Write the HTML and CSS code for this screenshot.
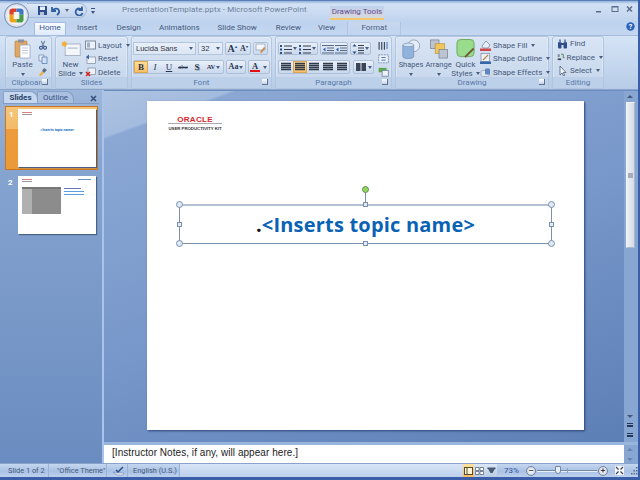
FILE: index.html
```html
<!DOCTYPE html>
<html>
<head>
<meta charset="utf-8">
<title>PresentationTemplate.pptx - Microsoft PowerPoint</title>
<link rel="stylesheet" href="styles.css">
</head>
<body>
<div class="window">
  <header class="titlebar">
    <div class="orb"><svg width="17" height="17" viewBox="0 0 24 24"><rect x="1" y="1" width="22" height="22" rx="5" fill="#fff"/><path d="M2 6q0-4 4-4h6v9H2z" fill="#d8402a"/><path d="M12 2h6q4 0 4 4v5H12z" fill="#3c78c8"/><path d="M2 11h10v11H6q-4 0-4-4z" fill="#eca420"/><path d="M12 11h10v7q0 4-4 4h-6z" fill="#4a9a48"/><rect x="8" y="7" width="8" height="10" fill="#fff" opacity=".9"/></svg></div>
    <div class="qat">
      <svg width="11" height="11" viewBox="0 0 11 11"><rect x="1" y="1" width="9" height="9" fill="#2d4f8f"/><rect x="3" y="1.500" width="5" height="3.500" fill="#e8eef8"/><rect x="3" y="7" width="4" height="3" fill="#b4c4dc"/></svg>
      <svg width="12" height="11" viewBox="0 0 12 11"><path d="M2 2v4h4M2.500 6C4 3 8 3 9 5.500S8 9 7 10" fill="none" stroke="#2f5f9f" stroke-width="1.800"/></svg>
      <span class="qat-arrow"></span>
      <svg class="redo" width="11" height="11" viewBox="0 0 11 11"><path d="M8 1.500v3.500H4.500M8 5A3.500 3.500 0 1 0 8.500 8" fill="none" stroke="#2f5f9f" stroke-width="1.800"/></svg>
    </div>
    <span class="qat-more"></span>
    <div class="doc-title">PresentationTemplate.pptx - Microsoft PowerPoint</div>
    <div class="context-title">Drawing Tools</div>
    <div class="winbtns">
      <svg width="50" height="12" viewBox="0 0 50 12"><rect x="10" y="8" width="5" height="1.500" fill="#5a6d8c"/><rect x="26" y="3.500" width="6" height="5" fill="none" stroke="#5a6d8c"/><rect x="26" y="3" width="6" height="1.500" fill="#5a6d8c"/><path d="M41 3.500l5 5M46 3.500l-5 5" stroke="#5a6d8c" stroke-width="1.500"/></svg>
    </div>
  </header>

  <nav class="tabs">
    <span class="tab active">Home</span>
    <span class="tab t-insert">Insert</span>
    <span class="tab t-design">Design</span>
    <span class="tab t-anim">Animations</span>
    <span class="tab t-show">Slide Show</span>
    <span class="tab t-review">Review</span>
    <span class="tab t-view">View</span>
    <span class="tab t-format">Format</span>
    <svg class="help" width="9" height="9" viewBox="0 0 9 9"><circle cx="4.500" cy="4.500" r="4.200" fill="#2c62b8"/><text x="4.500" y="7" text-anchor="middle" class="help-q">?</text></svg>
  </nav>

  <section class="ribbon">
    <div class="group g-clip">
      <div class="gbody clip-body">
        <div class="big paste">
          <svg width="17" height="20" viewBox="0 0 17 20"><rect x="1" y="2" width="12" height="16" rx="1" fill="#e0a860" stroke="#b07a38" stroke-width=".6"/><rect x="4" y="0.500" width="6" height="3" fill="#8a90a0"/><path d="M6 6h10v13H6z" fill="#fff" stroke="#8b9cb8" stroke-width=".7"/><path d="M8 9h6M8 11.500h6M8 14h6" stroke="#a9b7cd" stroke-width=".8"/></svg>
          <span>Paste</span><i class="drop"></i>
        </div>
        <div class="clip-icons">
          <svg width="10" height="10" viewBox="0 0 10 11"><path d="M3 1l3 6M7 1L4 7" stroke="#6e7f9a" stroke-width="1.200"/><circle cx="2.800" cy="8.500" r="1.600" fill="none" stroke="#2c4f88" stroke-width="1.200"/><circle cx="7.200" cy="8.500" r="1.600" fill="none" stroke="#2c4f88" stroke-width="1.200"/></svg>
          <svg width="10" height="10" viewBox="0 0 10 10"><path d="M1 1h5v6H1z" fill="#e8eef8" stroke="#6f86ad" stroke-width=".7"/><path d="M4 3h5v6.500H4z" fill="#cfe0f4" stroke="#4f73ad" stroke-width=".7"/></svg>
          <svg width="10" height="10" viewBox="0 0 10 10"><path d="M6 1l3 2-3 3-2-2z" fill="#5c6b85"/><path d="M4 4L1 8l1 1.500 4-3z" fill="#e8b64a"/></svg>
        </div>
      </div>
      <div class="glabel">Clipboard<i class="launch"></i></div>
    </div>

    <div class="group g-slides">
      <div class="gbody slides-body">
        <div class="big newslide">
          <svg width="20" height="20" viewBox="0 0 24 20"><rect x="5" y="4" width="18" height="14" fill="#f4f6fa" stroke="#8e9bb0" stroke-width=".8"/><rect x="8" y="8" width="12" height="2" fill="#c3cede"/><path d="M4 0l1 2 2-1-1 2 2 1-2 1 1 2-2-1-1 2-1-2-2 1 1-2-2-1 2-1-1-2 2 1z" fill="#f0b030"/></svg>
          <span>New</span><span>Slide <i class="drop inline"></i></span>
        </div>
        <div class="rows">
          <div class="row"><svg width="11" height="10" viewBox="0 0 11 10"><rect x=".5" y="1" width="10" height="8" fill="#eef2f8" stroke="#7c8aa2"/><rect x="2" y="2.500" width="3" height="5" fill="#9fb0c8"/></svg><span>Layout</span><i class="drop inline"></i></div>
          <div class="row"><svg width="11" height="10" viewBox="0 0 11 10"><rect x="2" y="3" width="8.500" height="6.500" fill="#eef2f8" stroke="#7c8aa2" stroke-width=".7"/><path d="M1 3l3-2.500v5z" fill="#3566a8"/></svg><span>Reset</span></div>
          <div class="row"><svg width="11" height="10" viewBox="0 0 11 10"><rect x="3" y="1" width="7.500" height="6.500" fill="#eef2f8" stroke="#7c8aa2" stroke-width=".7"/><path d="M1 5l4 4M5 5L1 9" stroke="#d42020" stroke-width="1.500"/></svg><span>Delete</span></div>
        </div>
      </div>
      <div class="glabel">Slides</div>
    </div>

    <div class="group g-font">
      <div class="gbody font-body">
        <div class="fline">
          <div class="combo c-name"><span>Lucida Sans</span><i class="drop"></i></div>
          <div class="combo c-size"><span>32</span><i class="drop"></i></div>
          <div class="btnset"><b class="fb grow">A<sup>▴</sup></b><b class="fb shrink">A<sup>▾</sup></b></div>
          <div class="btnset"><span class="fb clear"><svg width="11" height="11" viewBox="0 0 11 11"><rect x="1" y="1" width="9" height="6" fill="#f4f6fa" stroke="#7c8aa2" stroke-width=".6"/><path d="M5 9l4-5 1.500 1-4 5z" fill="#c88a48"/></svg></span></div>
        </div>
        <div class="fline l2">
          <div class="btnset fmt">
            <b class="fb on">B</b><i class="fb it">I</i><u class="fb">U</u><s class="fb sm">abc</s><b class="fb shadowed">S</b><span class="fb av">AV<i class="drop"></i></span>
          </div>
          <div class="btnset"><span class="fb aa">Aa<i class="drop"></i></span></div>
          <div class="btnset"><span class="fb color">A<em></em></span><span class="fb caret"><i class="drop"></i></span></div>
        </div>
      </div>
      <div class="glabel">Font<i class="launch"></i></div>
    </div>

    <div class="group g-para">
      <div class="gbody para-body">
        <div class="para-main">
          <div class="fline">
            <div class="btnset">
              <span class="pb wide"><svg width="12" height="10" viewBox="0 0 12 10"><use href="#bul"/></svg><i class="drop"></i></span>
              <span class="pb wide"><svg width="12" height="10" viewBox="0 0 12 10"><use href="#bul"/></svg><i class="drop"></i></span>
            </div>
            <div class="btnset">
              <span class="pb"><svg width="12" height="10" viewBox="0 0 12 10"><use href="#ind"/></svg></span>
              <span class="pb"><svg width="12" height="10" viewBox="0 0 12 10"><use href="#ind"/></svg></span>
            </div>
            <div class="btnset"><span class="pb wide"><svg width="12" height="10" viewBox="0 0 12 10"><path d="M2.500 0l2 2.500h-4zM2.500 10l2-2.500h-4z" fill="#2c4f88"/><path d="M6 1.500h6M6 4h6M6 6.500h6M6 9h6" stroke="#333d4d"/></svg><i class="drop"></i></span></div>
          </div>
          <div class="fline l2">
            <div class="btnset">
              <span class="pb al"><svg width="12" height="10" viewBox="0 0 12 10"><use href="#aln"/></svg></span>
              <span class="pb al on"><svg width="12" height="10" viewBox="0 0 12 10"><use href="#aln"/></svg></span>
              <span class="pb al"><svg width="12" height="10" viewBox="0 0 12 10"><use href="#aln"/></svg></span>
              <span class="pb al"><svg width="12" height="10" viewBox="0 0 12 10"><use href="#aln"/></svg></span>
              <span class="pb al"><svg width="12" height="10" viewBox="0 0 12 10"><use href="#aln"/></svg></span>
            </div>
            <div class="btnset"><span class="pb wide"><svg width="12" height="10" viewBox="0 0 12 10"><path d="M1 1h4.500v8H1zM6.500 1H11v8H6.500z" fill="#3a4556"/></svg><i class="drop"></i></span></div>
          </div>
        </div>
        <div class="para-side">
          <svg width="13" height="11" viewBox="0 0 13 11"><path d="M1.500 1v9M4.500 1v9M7.500 1v9" stroke="#2f3a4c" stroke-width="1.200"/><path d="M10.500 1v8" stroke="#2c62b8"/></svg>
          <svg width="13" height="11" viewBox="0 0 13 11"><rect x="1" y="1" width="11" height="9" fill="#eef2f8" stroke="#6f86ad" stroke-dasharray="2 1"/><path d="M4 4h5M4 7h5" stroke="#3566a8"/></svg>
          <svg width="13" height="11" viewBox="0 0 13 11"><rect x="1" y="1" width="9" height="5" fill="#5aa84a"/><rect x="5" y="4" width="7" height="6.500" fill="#eef2f8" stroke="#7c8aa2"/></svg>
        </div>
      </div>
      <div class="glabel">Paragraph<i class="launch"></i></div>
    </div>

    <div class="group g-draw">
      <div class="gbody draw-body">
        <div class="big shapes">
          <svg width="20" height="20" viewBox="0 0 22 21"><circle cx="14" cy="7" r="6.500" fill="#e6edf6" stroke="#8fa0b8"/><path d="M2 6h12v13a6 2 0 0 1-12 0z" fill="#8fb3dc" stroke="#6f86ad" stroke-width=".7"/><ellipse cx="8" cy="6" rx="6" ry="2" fill="#d5e4f5" stroke="#6f86ad" stroke-width=".7"/></svg>
          <span>Shapes</span><i class="drop"></i>
        </div>
        <div class="big arrange">
          <svg width="20" height="20" viewBox="0 0 20 21"><rect x="1" y="1" width="9" height="9" fill="#bcc4d0" stroke="#6f7b8e" stroke-width=".7"/><rect x="6" y="5" width="10" height="10" fill="#f2c65a" stroke="#b8903a" stroke-width=".7"/><rect x="10" y="11" width="9" height="9" fill="#bcc4d0" stroke="#6f7b8e" stroke-width=".7"/></svg>
          <span>Arrange</span><i class="drop"></i>
        </div>
        <div class="big qstyles">
          <svg width="20" height="20" viewBox="0 0 20 21"><rect x=".5" y=".5" width="18" height="18" rx="4" fill="#98dc8c" stroke="#6aa860"/><path d="M18 10l-9 9" stroke="#6d5a3a" stroke-width="2"/></svg>
          <span>Quick</span><span>Styles <i class="drop inline"></i></span>
        </div>
        <div class="rows shape-rows">
          <div class="row"><svg width="11" height="11" viewBox="0 0 11 11"><path d="M2 6l4-5 4 4-2 3H3z" fill="#e8eef8" stroke="#6f7b8e" stroke-width=".7"/><rect y="8.500" width="11" height="2.500" fill="#d04848"/></svg><span>Shape Fill</span><i class="drop inline"></i></div>
          <div class="row"><svg width="11" height="11" viewBox="0 0 11 11"><rect x="1" y="0.500" width="8.500" height="8" fill="#eef2f8" stroke="#7c8aa2" stroke-width=".7"/><path d="M3 7l5-5" stroke="#b88a48" stroke-width="1.300"/><rect y="8.500" width="11" height="2.500" fill="#3566a8"/></svg><span>Shape Outline</span><i class="drop inline"></i></div>
          <div class="row"><svg width="11" height="11" viewBox="0 0 11 11"><rect x="1" y="3.500" width="8" height="6" rx="1.500" fill="#dfe7f2" stroke="#8b9cb8" stroke-width=".7"/><rect x="5" y="1.500" width="5" height="6" rx="1" fill="#5e86bc"/></svg><span>Shape Effects</span><i class="drop inline"></i></div>
        </div>
      </div>
      <div class="glabel">Drawing<i class="launch"></i></div>
    </div>

    <div class="group g-edit">
      <div class="gbody edit-body">
        <div class="row"><svg width="11" height="10" viewBox="0 0 11 10"><rect x="1" y="3" width="3.500" height="6.500" rx="1" fill="#2c4f88"/><rect x="6.500" y="3" width="3.500" height="6.500" rx="1" fill="#2c4f88"/><rect x="2" y="0.500" width="2" height="3" fill="#6f86ad"/><rect x="7" y="0.500" width="2" height="3" fill="#6f86ad"/><rect x="4" y="4" width="3" height="2" fill="#2c4f88"/></svg><span>Find</span></div>
        <div class="row"><svg width="11" height="10" viewBox="0 0 11 10"><path d="M1 1h3v4H1z" fill="#7c8aa2"/><path d="M1 7h5v2.500H1z" fill="#3a4556"/><path d="M6 1h3v5h2" fill="none" stroke="#3a7a3a" stroke-width="1.200"/></svg><span>Replace</span><i class="drop inline"></i></div>
        <div class="row"><svg width="11" height="10" viewBox="0 0 11 10"><path d="M3 0v9l2-2 1.500 3 1.200-.6L6.300 6.500H9z" fill="#f4f6fa" stroke="#4a5a74" stroke-width=".8"/></svg><span>Select</span><i class="drop inline"></i></div>
      </div>
      <div class="glabel">Editing</div>
    </div>
  </section>

  <main class="workspace">
    <aside class="pane">
      <div class="pane-tabs">
        <span class="ptab on">Slides</span>
        <span class="ptab out">Outline</span>
        <svg class="pane-x" width="7" height="7" viewBox="0 0 7 7"><path d="M1 1l5 5M6 1L1 6" stroke="#33507e" stroke-width="1.500"/></svg>
      </div>
      <div class="thumb-wrap selected">
        <span class="num">1</span>
        <div class="thumb">
          <div class="mini-logo"><i></i><i></i></div>
          <div class="mini-title">.&lt;Inserts topic name&gt;</div>
        </div>
      </div>
      <div class="thumb-wrap">
        <span class="num">2</span>
        <div class="thumb t2">
          <div class="mini-logo"><i></i><i></i></div>
          <div class="mini-top"></div>
          <div class="mini-shot"><i></i></div>
          <div class="mini-lines"><i></i><i></i><i></i></div>
        </div>
      </div>
    </aside>

    <div class="center">
      <div class="edit-row">
        <div class="stage">
          <article class="slide">
            <div class="logo">
              <span class="oracle">ORACLE</span>
              <span class="upk">USER PRODUCTIVITY KIT</span>
            </div>
            <div class="selbox">
              <div class="title-text"><span class="dot">.</span>&lt;Inserts topic name&gt;</div>
              <i class="stem"></i><i class="rot"></i>
              <i class="h c tl"></i><i class="h c tr"></i><i class="h c bl"></i><i class="h c br"></i>
              <i class="h s tm"></i><i class="h s bm"></i><i class="h s ml"></i><i class="h s mr"></i>
            </div>
          </article>
        </div>
        <div class="vscroll">
          <span class="sb-btn up"></span>
          <span class="sb-thumb"><i></i></span>
          <span class="sb-space"></span>
          <span class="sb-btn down"></span>
          <span class="sb-nav prev"></span>
          <span class="sb-nav next"></span>
        </div>
      </div>
      <div class="notes-row">
        <div class="notes">[Instructor Notes, if any, will appear here.]</div>
        <div class="notes-sb"><span class="sb-btn up dim"></span><span class="sb-btn down dim"></span></div>
      </div>
    </div>
  </main>

  <footer class="status">
    <span class="st s1">Slide 1 of 2</span>
    <span class="st s2">"Office Theme"</span>
    <span class="st s3"><svg width="13" height="10" viewBox="0 0 13 10"><path d="M1 6l4 3h6l1-2H5z" fill="#f4f6fa" stroke="#6f86ad" stroke-width=".6"/><path d="M4 4l2 2 5-5" fill="none" stroke="#2c4f88" stroke-width="1.500"/></svg></span>
    <span class="st s4">English (U.S.)</span>
    <span class="st-fill"></span>
    <div class="views">
      <span class="vb on"><svg width="9" height="8" viewBox="0 0 9 8"><rect x=".5" y=".5" width="8" height="7" fill="#fff5d8" stroke="#5a4a2a"/><path d="M3 1v6" stroke="#5a4a2a"/></svg></span>
      <span class="vb"><svg width="9" height="8" viewBox="0 0 9 8"><path d="M.5.500h3.500v3H.5zM5 .5h3.500v3H5zM.5 4.500h3.500v3H.5zM5 4.500h3.500v3H5z" fill="#fff" stroke="#4a5a74" stroke-width=".7"/></svg></span>
      <span class="vb"><svg width="9" height="8" viewBox="0 0 9 8"><path d="M.5 1h8L5.500 6h-2z" fill="#4a5a74"/><rect x=".5" y=".5" width="8" height="1.500" fill="#4a5a74"/></svg></span>
    </div>
    <span class="pct">73%</span>
    <div class="zoomer">
      <span class="zbtn">–</span>
      <div class="ztrack"><i class="ztick"></i><i class="zthumb"></i></div>
      <span class="zbtn">+</span>
    </div>
    <span class="fit"><svg width="9" height="9" viewBox="0 0 9 9"><rect width="9" height="9" fill="#f4f6fa"/><path d="M1 1l2.500 2.500M8 1L5.500 3.500M1 8l2.500-2.500M8 8L5.500 5.500" stroke="#3a4556" stroke-width="1.200"/></svg></span>
    <span class="grip"><svg width="8" height="8" viewBox="0 0 8 8"><path d="M6 0h1.500v1.500H6zM3.500 3H5v1.500H3.500zM6 3h1.500v1.500H6zM1 6h1.500v1.500H1zM3.500 6H5v1.500H3.500zM6 6h1.500v1.500H6z" fill="#5c7092"/></svg></span>
  </footer>
</div>

<svg class="defs" width="0" height="0">
  <defs>
    <g id="bul"><path d="M0 1h2v2H0zM0 4.500h2v2H0zM0 8h2v2H0z" fill="#2c4f88"/><path d="M4 2h8M4 5.500h8M4 9h8" stroke="#333d4d"/></g>
    <g id="ind"><path d="M0 1.500h12M5 4h7M5 6.500h7M0 9h12" stroke="#5a6a84"/><path d="M3.500 3.500v4L1 5.500z" fill="#2c62b8"/></g>
    <g id="aln"><path d="M1 1.500h10M1 3.500h10M1 5.500h10M1 7.500h10" stroke="#2f3a4c" stroke-width="1.300"/></g>
  </defs>
</svg>
</body>
</html>
```

FILE: styles.css
```css
* { box-sizing: border-box; }
html, body { margin: 0; padding: 0; }
body { width: 640px; height: 480px; overflow: hidden; font-family: Roboto, "Noto Sans", sans-serif; font-size: 8px; color: #46597b; }
i, em { font-style: normal; }
.defs { position: absolute; }

.window { width: 640px; height: 480px; display: flex; flex-direction: column; background: #6c8dbf; border-bottom: 3px solid #3a5fa8; border-right: 2px solid #3a5fa8; }

/* Title bar */
.titlebar { height: 22px; flex: none; display: flex; align-items: flex-start; position: relative; padding-top: 2px; background: linear-gradient(#8fb0dc 0, #d3e1f4 3px, #c9daf1 12px, #bdd2ee 22px); border-top: 1px solid #5c7fb8; }
.orb { position: absolute; left: 4px; top: 2px; width: 25px; height: 25px; border-radius: 50%; background: radial-gradient(#ffffff, #e6eaf2 60%, #8ea5c8); border: 1px solid #7a8fb0; display: flex; align-items: center; justify-content: center; z-index: 2; }
.qat { margin-left: 27px; height: 15px; width: 60px; padding: 0 0 0 10px; display: flex; align-items: center; gap: 2px; background: linear-gradient(#dfe9f7, #bfd2ec); border-radius: 0 8px 8px 0; border: 1px solid #a4bbdb; border-left: 0; flex: none; }
.qat-arrow { width: 0; height: 0; border: 2px solid transparent; border-top: 3px solid #5a6a84; border-bottom: 0; margin: 0 2px 0 1px; }
.qat .redo { margin-left: 1px; }
.qat-more { width: 4px; height: 6px; margin: 5px 0 0 4px; border-top: 1px solid #3f5377; position: relative; flex: none; }
.qat-more::after { content: ""; position: absolute; top: 2px; left: 0; border: 2px solid transparent; border-top: 3px solid #3f5377; border-bottom: 0; }
.doc-title { margin-left: 27px; font-size: 8px; letter-spacing: .1px; line-height: 13px; color: #6d7f9b; white-space: nowrap; width: 208px; flex: none; }
.context-title { width: 54px; height: 14px; flex: none; margin-top: 3px; background: linear-gradient(#bed1ec, #d8d8dc); border-bottom: 2px solid #f0c76a; color: #6a4a8c; text-align: center; line-height: 11px; font-size: 8px; }
.winbtns { margin-left: auto; margin-right: 2px; height: 12px; }

/* Tabs */
.tabs { height: 13px; flex: none; display: flex; align-items: flex-end; position: relative; background: linear-gradient(#bdd2ee, #c4d7f1); font-size: 8px; line-height: 11px; color: #46597b; }
.tab { display: block; white-space: nowrap; height: 13px; }
.tab.active { margin-left: 34px; width: 32px; text-align: center; color: #3a5a96; background: linear-gradient(#f8fbff, #dfeafa); border: 1px solid #a3bbdc; border-bottom: 0; border-radius: 2px 2px 0 0; line-height: 10px; }
.t-insert { margin-left: 11px; }
.t-design { margin-left: 19px; }
.t-anim { margin-left: 18px; }
.t-show { margin-left: 18px; }
.t-review { margin-left: 19px; }
.t-view { margin-left: 17px; }
.t-format { margin-left: 12px; width: 54px; text-align: center; color: #4c5d82; background: linear-gradient(#c6d7ee, #c2d5f0); border-left: 1px solid #aec4e0; border-right: 1px solid #aec4e0; }
.help { position: absolute; right: 3px; top: 0; }
.help-q { font: 700 7px Roboto, sans-serif; fill: #fff; }

/* Ribbon */
.ribbon { height: 55px; flex: none; display: flex; padding: 0 0 0 5px; background: linear-gradient(#d5e3f5, #c3d6ee 60%, #b6cbe7); border-top: 1px solid #a5bddd; border-bottom: 1px solid #8aa5cb; gap: 3px; }
.group { display: flex; flex-direction: column; background: linear-gradient(#d9e5f5, #c5d5ea); border: 1px solid #b2c5df; border-radius: 3px; box-shadow: inset 0 0 0 1px rgba(255,255,255,.25); }
.gbody { flex: 1; display: flex; min-height: 0; }
.glabel { height: 11px; flex: none; position: relative; text-align: center; line-height: 11px; font-size: 8px; color: #5a7aa8; background: #bcd0e9; border-radius: 0 0 2px 2px; }
.launch { position: absolute; right: 3px; top: 2px; width: 6px; height: 6px; border-right: 1px solid #5e7392; border-bottom: 1px solid #5e7392; background: linear-gradient(#fff, #c4d2e6); }
.g-clip { width: 47px; }
.g-slides { width: 73px; }
.g-font { width: 141px; }
.g-para { width: 117px; }
.g-draw { width: 154px; }
.g-edit { width: 52px; }

.big { display: flex; flex-direction: column; align-items: center; text-align: center; line-height: 8.500px; flex: none; white-space: nowrap; }
.big svg { margin-bottom: 2px; flex: none; }
.drop { display: block; width: 0; height: 0; border: 2px solid transparent; border-top: 3px solid #4a5f80; border-bottom: 0; flex: none; }
.drop.inline { display: inline-block; vertical-align: middle; margin-left: 1px; }
.big > .drop { margin-top: 3px; }

.clip-body { padding: 2px 0 0 7px; }
.paste { width: 19px; }
.clip-icons { display: flex; flex-direction: column; gap: 3.500px; padding-top: 1px; margin-left: 6px; }
.slides-body { padding: 2px 0 0 4px; gap: 4px; }
.newslide { width: 21px; }
.rows { display: flex; flex-direction: column; gap: 2.500px; padding-top: 0.500px; }
.row { display: flex; align-items: center; gap: 2px; height: 11px; white-space: nowrap; font-size: 8px; line-height: 11px; flex: none; }
.row .drop { margin-left: 2px; }

.font-body, .para-main { flex-direction: column; }
.font-body { padding: 5px 0 0 1px; }
.fline { display: flex; gap: 2px; height: 13px; flex: none; }
.fline.l2 { margin-top: 5px; height: 14px; }
.combo { display: flex; align-items: center; justify-content: space-between; height: 13px; padding: 0 2px 0 2px; background: linear-gradient(#e8eff9, #dbe6f4); border: 1px solid #b3c5dc; font-family: "Liberation Sans", sans-serif; font-size: 7.500px; color: #334; flex: none; }
.c-name { width: 63px; }
.c-size { width: 25px; }
.btnset { display: flex; border: 1px solid #aebfd8; border-radius: 2px; background: linear-gradient(#e9f0fa, #c9d8ec); flex: none; }
.fb { display: flex; align-items: center; justify-content: center; width: 14px; font-family: "Liberation Serif", serif; font-size: 9px; color: #2a3650; line-height: 1; }
.fb sup { font-size: 4px; margin-top: -4px; color: #2c4f88; }
.fb.grow { font-size: 10px; width: 12px; }
.fb.shrink { font-size: 8px; width: 12px; }
.fb.clear { width: 13px; }
.fb.on, .pb.on { background: linear-gradient(#fde2a0, #f8bd62); box-shadow: inset 0 0 0 1px #dfa64e; }
.fb.it { font-style: italic; }
.fb.sm { font-size: 7px; }
.fb.shadowed { text-shadow: 1px 1px 0 #9aa; }
.fb.av { width: 17px; font-size: 6.500px; font-weight: 700; gap: 1px; }
.fb.aa { width: 18px; gap: 1px; font-size: 8px; font-weight: 700; }
.fb.color { width: 12px; flex-direction: column; font-weight: 700; font-size: 8.500px; }
.fb.color em { display: block; width: 10px; height: 2px; background: #e01010; }
.fb.caret { width: 8px; }
.fmt .fb { width: 14px; }
.fmt .fb.av { width: 19px; }

.para-body { padding: 5px 0 0 2px; gap: 3px; }
.para-main { width: 95px; flex: none; }
.para-main .fline { gap: 2px; }
.para-main .fline.l2 { gap: 3px; }
.pb { display: flex; align-items: center; justify-content: center; width: 13px; gap: 1px; }
.pb.wide { width: 19px; }
.pb.al { width: 14px; }
.pb svg { flex: none; }
.para-side { display: flex; flex-direction: column; gap: 3.500px; padding-left: 1px; margin-top: -1px; }

.draw-body { padding: 2px 0 0 3px; }
.shapes { width: 24px; font-size: 7.500px; }
.arrange { width: 31px; font-size: 7.500px; }
.qstyles { width: 23px; }
.shape-rows { padding-left: 3px; }
.shape-rows .row { gap: 2px; }
.edit-body { flex-direction: column; gap: 2.500px; padding: 1px 0 0 4px; }
.edit-body .row { gap: 2px; }

/* Workspace */
.workspace { flex: 1; display: flex; min-height: 0; background: #6c8dc0; }
.pane { width: 104px; flex: none; padding: 2px 3px 0 3px; background: linear-gradient(#9db6da 0, #86a4d0 20%, #6a8cc0 100%); border-right: 2px solid #a9c3ea; }
.pane-tabs { display: flex; height: 12px; position: relative; align-items: flex-end; border-bottom: 1px solid #7f9ac4; font-size: 8px; line-height: 11px; }
.ptab { height: 12px; border-radius: 2px 8px 0 0; border: 1px solid #86a0c8; border-bottom: 0; text-align: center; background: #a9c0e0; color: #3b5180; }
.ptab.on { width: 35px; background: #c6d8f0; color: #2a3e63; font-weight: 700; z-index: 1; }
.ptab.out { width: 37px; margin-left: -1px; }
.pane-x { position: absolute; right: 2px; top: 3px; }
.thumb-wrap { height: 64px; margin-top: 4px; padding: 2px 0 0 15px; position: relative; }
.thumb-wrap.selected { background: linear-gradient(#f6c57c 0, #f3ba68 35%, #ec9c3c 36%, #ea9a38); border: 1px solid #c97820; width: 93px; margin-left: 2px; padding: 2px 0 0 12px; margin-top: 2px; }
.num { position: absolute; left: 5px; top: 4px; color: #fff; font-size: 8px; font-weight: 700; }
.selected .num { left: 3px; top: 3px; }
.thumb { width: 78px; height: 58px; background: #fff; position: relative; box-shadow: 1px 1px 1px #4a5f82; }
.mini-logo { position: absolute; left: 4px; top: 3px; width: 10px; display: flex; flex-direction: column; gap: 1px; }
.mini-logo i { height: 1px; background: #d98080; }
.mini-logo i + i { background: #999; }
.mini-title { position: absolute; left: 0; right: 0; top: 19px; text-align: center; font-size: 3.600px; font-weight: 700; color: #1a6cc0; line-height: 4px; white-space: nowrap; }
.mini-top { position: absolute; right: 5px; top: 3px; width: 13px; height: 1px; background: #6a90c8; }
.mini-shot { position: absolute; left: 4px; top: 11px; width: 39px; height: 27px; background: #8c8c8c; border-top: 2px solid #777; }
.mini-shot i { display: block; width: 10px; height: 25px; background: #b0b0b0; }
.mini-lines { position: absolute; left: 46px; top: 12px; display: flex; flex-direction: column; gap: 2px; }
.mini-lines i { display: block; width: 17px; height: 1px; background: #6a7ac0; }
.mini-lines i + i { width: 20px; background: #5aa0e0; }

.center { flex: 1; display: flex; flex-direction: column; min-width: 0; padding-top: 1px; }
.edit-row { flex: 1; display: flex; min-height: 0; }
.stage { flex: 1; padding: 10px 0 0 43px; background: linear-gradient(160deg, #adc3e2 0, #a3bbde 8.500%, #8ba8d4 9%, #7897ca 50%, #5c7fb6 100%); }
.slide { width: 437px; height: 329px; background: #fff; position: relative; box-shadow: 1px 1px 2px #2d4474; padding: 15px 0 0 21px; }
.logo { width: 54px; display: flex; flex-direction: column; align-items: stretch; text-align: center; }
.oracle { font-family: "Liberation Sans", sans-serif; font-size: 8px; font-weight: 700; line-height: 7px; color: #d8262c; letter-spacing: .3px; border-bottom: 1px solid #aaa; height: 8px; white-space: nowrap; }
.upk { margin-top: 2px; font-family: "Liberation Sans", sans-serif; font-weight: 700; font-size: 4.300px; line-height: 5px; color: #333; white-space: nowrap; }
.selbox { position: absolute; left: 32px; top: 103px; width: 373px; height: 40px; border: 1px solid #7a90ad; border-top: 2px solid #b3c0d2; display: flex; align-items: center; justify-content: center; }
.title-text { font-family: "Open Sans", sans-serif; font-weight: 700; font-size: 20px; color: #0a62b4; white-space: nowrap; line-height: 24px; letter-spacing: .2px; }
.dot { color: #111; }
.h { position: absolute; display: block; background: #dfeaf5; border: 1px solid #7a90ad; }
.c { width: 7px; height: 7px; border-radius: 50%; }
.s { width: 5px; height: 5px; }
.tl { left: -4px; top: -5px; } .tr { right: -4px; top: -5px; }
.bl { left: -4px; bottom: -4px; } .br { right: -4px; bottom: -4px; }
.tm { left: 183px; top: -4px; } .bm { left: 183px; bottom: -3px; }
.ml { left: -3px; top: 16px; } .mr { right: -3px; top: 16px; }
.stem { position: absolute; left: 185px; top: -15px; width: 1px; height: 12px; background: #7a90ad; }
.rot { position: absolute; left: 182px; top: -20px; width: 7px; height: 7px; border-radius: 50%; background: #8ed860; border: 1px solid #6a8a58; }

.vscroll { width: 14px; flex: none; display: flex; flex-direction: column; align-items: center; background: #88a6d2; padding: 1px 2px 0 0; }
.sb-btn { display: block; width: 10px; height: 10px; flex: none; position: relative; }
.sb-btn::after { content: ""; position: absolute; left: 2px; top: 3px; border: 3px solid transparent; }
.sb-btn.up::after { border-bottom: 3px solid #44587c; border-top: 0; }
.sb-btn.down::after { border-top: 3px solid #44587c; border-bottom: 0; }
.sb-btn.dim::after { opacity: .45; }
.sb-thumb { width: 9px; height: 146px; flex: none; background: linear-gradient(90deg, #eceff4, #d6dce6); border: 1px solid #f2f5fa; border-right-color: #a9b8cc; border-bottom-color: #a9b8cc; display: flex; align-items: center; justify-content: center; }
.sb-thumb i { display: block; width: 5px; height: 5px; background: #a6adb8; }
.sb-space { flex: 1; }
.sb-nav { display: block; width: 10px; height: 10px; position: relative; flex: none; }
.sb-nav::before { content: ""; position: absolute; left: 2px; top: 1px; width: 6px; height: 6px; background: linear-gradient(#27385a 0, #27385a 1px, transparent 1px, transparent 2px, #27385a 2px, #27385a 4px, transparent 4px, transparent 100%); }

.notes-row { height: 21px; flex: none; display: flex; border-top: 3px solid #98b5de; background: #fff; }
.notes { flex: 1; padding: 1px 0 0 8px; font-family: "Liberation Sans", sans-serif; font-size: 10px; letter-spacing: .05px; line-height: 14px; color: #222; background: #fff; }
.notes-sb { width: 14px; flex: none; background: #88a6d2; display: flex; flex-direction: column; justify-content: space-between; align-items: center; padding-right: 2px; }

/* Status */
.status { height: 14px; flex: none; display: flex; align-items: center; font-size: 7.400px; line-height: 14px; color: #46597b; background: linear-gradient(#c5d7ef, #a9c1e4 55%, #bcd1ee); border-top: 1px solid #87a3cc; }
.st { display: flex; align-items: center; height: 100%; white-space: nowrap; border-right: 1px solid #9cb3d4; flex: none; }
.s1 { padding-left: 8px; width: 49px; }
.s2 { padding-left: 8px; width: 58px; }
.s3 { padding-left: 5px; width: 21px; }
.s4 { padding-left: 5px; width: 52px; }
.st-fill { flex: 1; height: 100%; background: linear-gradient(#d8e5f6, #bcd0ec); }
.views { display: flex; height: 13px; flex: none; }
.vb { width: 11px; display: flex; align-items: center; justify-content: center; background: linear-gradient(#dce7f5, #b9cbe4); }
.vb + .vb + .vb { width: 12px; }
.vb.on { background: linear-gradient(#fde2a0, #f7bc60); }
.pct { width: 29px; flex: none; text-align: center; color: #2e58a2; font-size: 8px; }
.zoomer { width: 82px; display: flex; align-items: center; justify-content: space-between; flex: none; }
.zbtn { width: 10px; height: 10px; flex: none; border-radius: 50%; border: 1px solid #72839e; background: radial-gradient(#fff, #bcc9dc); text-align: center; line-height: 7px; font-size: 8px; font-weight: 700; color: #333; }
.ztrack { flex: 1; height: 1px; background: #74889f; position: relative; margin: 0 1px; box-shadow: 0 1px 0 #e6eef8; }
.zthumb { position: absolute; left: 18px; top: -4px; width: 6px; height: 8px; background: #e8eef7; border: 1px solid #75859e; border-radius: 1px 1px 3px 3px; }
.ztick { position: absolute; left: 30px; top: -2px; width: 1px; height: 5px; background: #8ca0bc; }
.fit { margin-left: 7px; display: flex; flex: none; }
.grip { margin-left: 6px; display: flex; flex: none; }
```
